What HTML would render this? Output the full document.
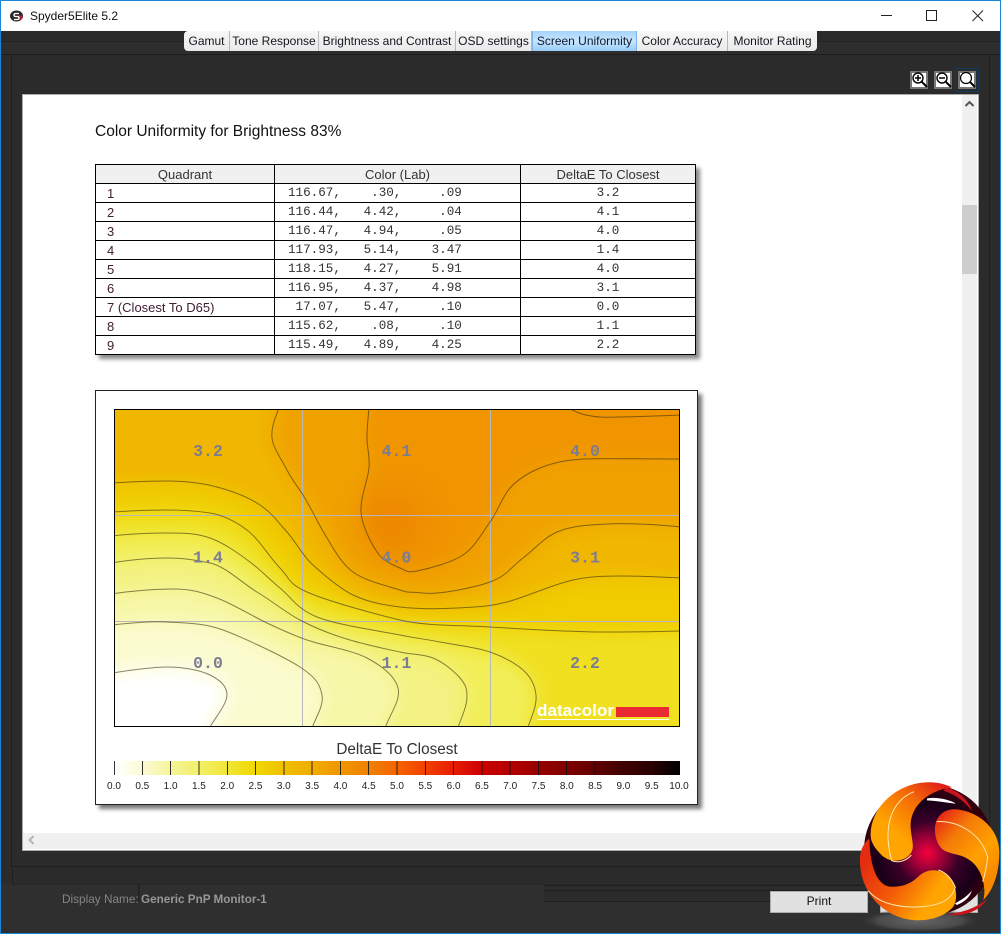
<!DOCTYPE html>
<html><head><meta charset="utf-8"><title>Spyder5Elite 5.2</title>
<style>
html,body{margin:0;padding:0;background:#2b2b2b}
#p{position:relative;width:1001px;height:934px;overflow:hidden;background:#2b2b2b;font-family:"Liberation Sans",sans-serif}
#p div,#p svg,#p table{position:absolute}
.l{background:#1f1f1f}
.tab{top:31px;height:20px;line-height:20px;font-size:12px;text-align:center;color:#15151f;background:linear-gradient(#f8f8f8,#e9e9e9);border-right:1px solid #b8b8b8;box-sizing:border-box;white-space:nowrap}
table{border-collapse:collapse;table-layout:fixed;left:95px;top:164px;width:600px;background:#fff;box-shadow:4px 4px 4px #888}
td,th{border:1px solid #000;height:18px;padding:0;font-size:13px;font-weight:normal;text-align:center;color:#222;line-height:17px;white-space:pre;overflow:hidden}
th{background:#f0f0f0;color:#333}
td.a{text-align:left;padding-left:11px;color:#402030}
td.b{text-align:left;padding-left:13px;font:12.6px/17px "Liberation Mono",monospace;color:#333}
td.c{font:12.6px/17px "Liberation Mono",monospace;color:#333}
.mv{fill:#7c7c92;font:bold 16.5px "Liberation Mono",monospace;text-anchor:middle}
.ct{fill:none;stroke:#3c3010;stroke-opacity:.6;stroke-width:1}
.lb{font:10px "Liberation Sans",sans-serif;fill:#222;text-anchor:middle}
.zb{background:#fff;border:2px solid #777;box-sizing:border-box;width:18px;height:18px;top:71px}
</style></head><body><div id="p">

<div style="left:0;top:0;width:1001px;height:31px;background:#fff"></div>
<svg style="left:8px;top:7px" width="18" height="18" viewBox="0 0 18 18"><ellipse cx="8.500" cy="9" rx="6.500" ry="5.500" fill="#2a2a2a"/><circle cx="12" cy="10.500" r="2.500" fill="#b01c30"/><path d="M11 6.500H7.500Q6 6.500 6 8T7.500 9.500H9.500Q11 9.500 11 11T9.500 12.500H6" fill="none" stroke="#fff" stroke-width="1.300"/></svg>
<div style="left:30px;top:8px;font-size:12px;line-height:16px;color:#111;white-space:nowrap">Spyder5Elite 5.2</div>
<svg style="left:870px;top:0" width="130" height="31"><path d="M11 15.500H22" stroke="#222" fill="none"/><rect x="56.500" y="10.500" width="10" height="10" fill="none" stroke="#222"/><path d="M102.500 10.500L113 21M113 10.500L102.500 21" stroke="#222" fill="none"/></svg>

<!-- dark structure -->
<div style="left:1px;top:41px;width:999px;height:14px;background:#2d2d2d;border-top:1px solid #232323;border-bottom:1px solid #1c1c1c;box-sizing:border-box"></div>
<div class="l" style="left:11px;top:55px;width:1px;height:812px"></div>
<div class="l" style="left:989px;top:55px;width:1px;height:812px"></div>
<div class="l" style="left:11px;top:866px;width:979px;height:1px"></div>
<div style="left:1px;top:884px;width:999px;height:49px;background:#2f2f2f"></div>
<div class="l" style="left:12px;top:869px;width:1px;height:15px"></div>
<div class="l" style="left:12px;top:884px;width:975px;height:1px;background:#262626"></div>
<div class="l" style="left:138px;top:885px;width:2px;height:16px;background:#252525"></div>
<div style="left:544px;top:885px;width:446px;height:16px;background:#2b2b2b"></div>
<div class="l" style="left:544px;top:885px;width:446px;height:1px"></div>
<div class="l" style="left:544px;top:890px;width:446px;height:1px"></div>
<div class="l" style="left:544px;top:901px;width:226px;height:1px"></div>

<!-- tabs -->
<div class="tab" style="left:184px;width:46px;border-radius:4px 0 0 4px">Gamut</div>
<div class="tab" style="left:230px;width:89px">Tone Response</div>
<div class="tab" style="left:319px;width:137px">Brightness and Contrast</div>
<div class="tab" style="left:456px;width:76px">OSD settings</div>
<div class="tab" style="left:532px;width:105px;background:linear-gradient(#a6d4fb,#c8e4fc 50%,#98cdf9);border-left:1px solid #7ab4e8;border-right:1px solid #7ab4e8;color:#0a1a30">Screen Uniformity</div>
<div class="tab" style="left:637px;width:91px">Color Accuracy</div>
<div class="tab" style="left:728px;width:89px;border-radius:0 0 4px 0;border-right:0">Monitor Rating</div>

<!-- zoom buttons -->
<div class="zb" style="left:910px"></div>
<div class="zb" style="left:934px"></div>
<div style="left:955px;top:68px;width:24px;height:24px;border:1px solid #103a60;box-sizing:border-box;background:#2b2b2b"></div>
<div class="zb" style="left:958px"></div>
<svg style="left:905px;top:66px" width="80" height="28" fill="none" stroke="#000">
<circle cx="13" cy="12" r="5" stroke-width="1.400"/><path d="M17 16L22 21M16.500 15.500L21.500 20.500" stroke-width="2"/><path d="M10 12H16M13 9V15" stroke-width="1.500"/>
<circle cx="37" cy="12" r="5" stroke-width="1.400"/><path d="M41 16L46 21" stroke-width="2"/><path d="M34 12H40" stroke-width="1.500"/>
<circle cx="61" cy="12" r="5.500" stroke-width="1.200"/><path d="M65 16L70 21" stroke-width="2"/></svg>

<!-- content -->
<div style="left:22px;top:94px;width:957px;height:757px;background:#fff;border:1px solid #aaa;box-sizing:border-box"></div>
<div style="left:962px;top:95px;width:15px;height:754px;background:#f0f0f0"></div>
<div style="left:962px;top:205px;width:15px;height:69px;background:#cdcdcd"></div>
<svg style="left:962px;top:97px" width="15" height="12"><path d="M3.500 9L7.500 5L11.500 9" fill="none" stroke="#555" stroke-width="2"/></svg>
<div style="left:23px;top:833px;width:939px;height:16px;background:#f0f0f0"></div>
<svg style="left:26px;top:833px" width="12" height="14"><path d="M7.500 3L3.500 7L7.500 11" fill="none" stroke="#b5b5b5" stroke-width="2"/></svg>

<div style="left:95px;top:123px;font-size:15.5px;line-height:18px;color:#111;white-space:nowrap">Color Uniformity for Brightness 83%</div>

<table><colgroup><col style="width:179px"><col style="width:246px"><col style="width:175px"></colgroup>
<tr><th>Quadrant</th><th>Color (Lab)</th><th>DeltaE To Closest</th></tr>
<tr><td class="a">1</td><td class="b">116.67,    .30,     .09</td><td class="c">3.2</td></tr>
<tr><td class="a">2</td><td class="b">116.44,   4.42,     .04</td><td class="c">4.1</td></tr>
<tr><td class="a">3</td><td class="b">116.47,   4.94,     .05</td><td class="c">4.0</td></tr>
<tr><td class="a">4</td><td class="b">117.93,   5.14,    3.47</td><td class="c">1.4</td></tr>
<tr><td class="a">5</td><td class="b">118.15,   4.27,    5.91</td><td class="c">4.0</td></tr>
<tr><td class="a">6</td><td class="b">116.95,   4.37,    4.98</td><td class="c">3.1</td></tr>
<tr><td class="a">7 (Closest To D65)</td><td class="b"> 17.07,   5.47,     .10</td><td class="c">0.0</td></tr>
<tr><td class="a">8</td><td class="b">115.62,    .08,     .10</td><td class="c">1.1</td></tr>
<tr><td class="a">9</td><td class="b">115.49,   4.89,    4.25</td><td class="c">2.2</td></tr>
</table>

<div style="left:95px;top:390px;width:603px;height:415px;background:#fff;border:1px solid #222;box-sizing:border-box;box-shadow:4px 4px 4px #777"></div>

<svg style="left:0;top:0" width="1001" height="934" viewBox="0 0 1001 934">
<defs>
<clipPath id="pc"><rect x="114" y="409" width="566" height="318"/></clipPath>
<filter id="bl" x="-10%" y="-10%" width="120%" height="120%" color-interpolation-filters="sRGB"><feGaussianBlur stdDeviation="9"/></filter>
<filter id="bp" x="-50%" y="-50%" width="200%" height="200%" color-interpolation-filters="sRGB"><feGaussianBlur stdDeviation="18"/></filter>
<linearGradient id="cb"><stop offset="0" stop-color="#fff"/><stop offset=".05" stop-color="#fbfbd4"/><stop offset=".1" stop-color="#f5f59a"/><stop offset=".15" stop-color="#f2ef68"/><stop offset=".2" stop-color="#f1e636"/><stop offset=".25" stop-color="#f0d800"/><stop offset=".3" stop-color="#f0c000"/><stop offset=".35" stop-color="#f0ac00"/><stop offset=".4" stop-color="#f09600"/><stop offset=".45" stop-color="#f08000"/><stop offset=".5" stop-color="#f46400"/><stop offset=".55" stop-color="#f24000"/><stop offset=".6" stop-color="#e81c00"/><stop offset=".65" stop-color="#cc0000"/><stop offset=".7" stop-color="#b40000"/><stop offset=".75" stop-color="#980000"/><stop offset=".8" stop-color="#800000"/><stop offset=".85" stop-color="#600000"/><stop offset=".9" stop-color="#400000"/><stop offset=".95" stop-color="#280000"/><stop offset="1" stop-color="#000"/></linearGradient>
</defs>
<g clip-path="url(#pc)">
<g filter="url(#bl)">
<rect x="60" y="350" width="690" height="440" fill="#fff"/>
<path fill="#fbfbd0" d="M112 673C125 671 151 667 167 667S200 670 210 675S227 686 227 695S215 718 210 727L210 790L750 790L750 350L60 350L60 676Z"/>
<path fill="#f7f7a8" d="M112 625C130 623 150 621 167 622S200 623 217 628S283 656 300 667S320 685 322 695S317 715 312 728L312 790L750 790L750 350L60 350L60 628Z"/>
<path fill="#f3f282" d="M112 594C130 591 155 589 173 589S201 592 217 598S252 616 267 623S290 634 307 640S352 650 367 658S395 676 398 688S391 712 385 728L385 790L750 790L750 350L60 350L60 597Z"/>
<path fill="#f1ee58" d="M112 563C128 560 150 558 167 558S195 560 210 563S242 583 257 592S285 612 300 620S333 635 350 640S386 649 400 652S423 654 433 658S454 671 460 678S467 689 467 697S462 717 458 727L458 790L750 790L750 350L60 350L60 566Z"/>
<path fill="#f0e020" d="M112 536C128 534 150 533 167 533S196 533 210 538S238 553 250 562S269 579 280 588S297 609 317 617S380 631 400 635S425 639 440 642S476 647 490 652S515 663 523 670S535 685 536 695S532 716 528 727L528 790L750 790L750 350L60 350L60 538Z"/>
<path fill="#f0cc00" d="M112 512C128 511 150 510 167 510S197 511 210 513S235 521 247 530S270 558 280 568S287 583 307 592S375 614 400 620S456 625 490 627S570 632 607 632S650 632 682 631L750 631L750 350L60 350L60 513Z"/>
<path fill="#f0b600" d="M112 483C128 482 150 481 167 481S202 483 217 487S248 497 260 505S278 522 287 532S302 555 313 565S339 588 353 595S383 605 400 607S439 609 457 608S488 607 507 602S554 584 573 580S605 576 623 576S660 577 682 578L750 578L750 350L60 350L60 484Z"/>
<path fill="#f0a200" d="M279 408C275 418 271 428 272 438S282 460 287 470S296 484 303 495S319 525 327 538S341 563 353 572S388 586 400 590S408 591 423 593S473 588 490 582S512 566 523 558S543 538 557 532S586 525 607 524S650 524 682 527L750 527L750 350L279 350Z"/>
<path fill="#f09500" d="M369 408C368 418 367 428 367 438S370 456 369 468S360 498 361 512S371 543 377 552S393 565 400 568S407 573 417 571S451 563 463 555S482 533 490 522S502 497 510 488S528 473 540 468S565 460 583 459S640 459 682 459L750 459L750 350L369 350Z"/>
</g>
<ellipse cx="392" cy="522" rx="30" ry="28" fill="#ec8400" filter="url(#bp)"/>
<g stroke="#b8b8b8" stroke-width="1"><path d="M302.500 409V727M490.500 409V727M114 515.500H680M114 621.500H680"/></g>
<g class="ct">
<path d="M112 673C125 671 151 667 167 667S200 670 210 675S227 686 227 695S215 718 210 727"/>
<path d="M112 625C130 623 150 621 167 622S200 623 217 628S283 656 300 667S320 685 322 695S317 715 312 728"/>
<path d="M112 594C130 591 155 589 173 589S201 592 217 598S252 616 267 623S290 634 307 640S352 650 367 658S395 676 398 688S391 712 385 728"/>
<path d="M112 563C128 560 150 558 167 558S195 560 210 563S242 583 257 592S285 612 300 620S333 635 350 640S386 649 400 652S423 654 433 658S454 671 460 678S467 689 467 697S462 717 458 727"/>
<path d="M112 536C128 534 150 533 167 533S196 533 210 538S238 553 250 562S269 579 280 588S297 609 317 617S380 631 400 635S425 639 440 642S476 647 490 652S515 663 523 670S535 685 536 695S532 716 528 727"/>
<path d="M112 512C128 511 150 510 167 510S197 511 210 513S235 521 247 530S270 558 280 568S287 583 307 592S375 614 400 620S456 625 490 627S570 632 607 632S650 632 682 631"/>
<path d="M112 483C128 482 150 481 167 481S202 483 217 487S248 497 260 505S278 522 287 532S302 555 313 565S339 588 353 595S383 605 400 607S439 609 457 608S488 607 507 602S554 584 573 580S605 576 623 576S660 577 682 578"/>
<path d="M279 408C275 418 271 428 272 438S282 460 287 470S296 484 303 495S319 525 327 538S341 563 353 572S388 586 400 590S408 591 423 593S473 588 490 582S512 566 523 558S543 538 557 532S586 525 607 524S650 524 682 527"/>
<path d="M369 408C368 418 367 428 367 438S370 456 369 468S360 498 361 512S371 543 377 552S393 565 400 568S407 573 417 571S451 563 463 555S482 533 490 522S502 497 510 488S528 473 540 468S565 460 583 459S640 459 682 459"/>
<path d="M568 408C578 413 585 416 600 417S650 416 682 415"/>
</g>
</g>
<rect x="114.500" y="409.500" width="565" height="317" fill="none" stroke="#000" stroke-width="1"/>
<text class="mv" x="208" y="456">3.2</text><text class="mv" x="396.500" y="456">4.1</text><text class="mv" x="585" y="456">4.0</text>
<text class="mv" x="208" y="562.500">1.4</text><text class="mv" x="396.500" y="562.500">4.0</text><text class="mv" x="585" y="562.500">3.1</text>
<text class="mv" x="208" y="668">0.0</text><text class="mv" x="396.500" y="668">1.1</text><text class="mv" x="585" y="668">2.2</text>
<text x="537" y="716" fill="#fff" style="font:bold 17px 'Liberation Sans',sans-serif" textLength="77" lengthAdjust="spacingAndGlyphs">datacolor</text>
<rect x="616" y="707" width="53" height="10" fill="#ea2a33"/>
<rect x="537" y="719" width="132" height="1" fill="#fff"/>

<text x="397" y="754" text-anchor="middle" fill="#333" style="font:15.3px 'Liberation Sans',sans-serif">DeltaE To Closest</text>
<rect x="114" y="761" width="566" height="14" fill="url(#cb)"/>
<path stroke="#111" stroke-width="1" opacity=".85" d="M114.500 761V775M142.500 761V775M170.500 761V775M199 761V775M227.500 761V775M255.500 761V775M284 761V775M312 761V775M340.500 761V775M368.500 761V775M397 761V775M425.500 761V775M453.500 761V775M482 761V775M510 761V775M538.500 761V775M566.500 761V775M595 761V775M623.500 761V775M651.500 761V775"/>
<g class="lb">
<text x="114" y="789">0.0</text><text x="142.300" y="789">0.5</text><text x="170.600" y="789">1.0</text><text x="198.900" y="789">1.5</text><text x="227.200" y="789">2.0</text><text x="255.500" y="789">2.5</text><text x="283.800" y="789">3.0</text><text x="312.100" y="789">3.5</text><text x="340.400" y="789">4.0</text><text x="368.700" y="789">4.5</text><text x="397" y="789">5.0</text><text x="425.300" y="789">5.5</text><text x="453.600" y="789">6.0</text><text x="481.900" y="789">6.5</text><text x="510.200" y="789">7.0</text><text x="538.500" y="789">7.5</text><text x="566.800" y="789">8.0</text><text x="595.100" y="789">8.5</text><text x="623.400" y="789">9.0</text><text x="651.700" y="789">9.5</text><text x="679" y="789">10.0</text>
</g>
</svg>

<!-- footer -->
<div style="left:62px;top:892px;font-size:11.8px;line-height:15px;color:#858585;white-space:nowrap">Display Name:</div>
<div style="left:141px;top:892px;font-size:11.7px;line-height:15px;font-weight:bold;color:#979797;white-space:nowrap">Generic PnP Monitor-1</div>
<div style="left:770px;top:891px;width:98px;height:22px;background:#e1e1e1;border:1px solid #adadad;box-sizing:border-box;text-align:center;font-size:12px;line-height:19px;color:#111">Print</div>
<div style="left:880px;top:891px;width:98px;height:22px;background:#e1e1e1;border:1px solid #adadad;box-sizing:border-box"></div>

<!-- logo -->
<svg style="left:840px;top:770px" width="161" height="164" viewBox="0 0 483 492">
<defs>
<radialGradient id="sh"><stop offset="0" stop-color="#666"/><stop offset=".7" stop-color="#4a4a4a"/><stop offset="1" stop-color="#2f2f2f" stop-opacity="0"/></radialGradient>
<radialGradient id="core" gradientUnits="userSpaceOnUse" cx="262" cy="250" r="190"><stop offset="0" stop-color="#f5003c"/><stop offset=".22" stop-color="#a80038"/><stop offset=".5" stop-color="#3a0028"/><stop offset=".8" stop-color="#180018"/><stop offset="1" stop-color="#30000f"/></radialGradient>
<linearGradient id="b1" gradientUnits="userSpaceOnUse" x1="300" y1="40" x2="140" y2="230"><stop offset="0" stop-color="#e02018"/><stop offset=".35" stop-color="#f46a08"/><stop offset=".8" stop-color="#ffa400"/></linearGradient>
<linearGradient id="b2" gradientUnits="userSpaceOnUse" x1="300" y1="140" x2="470" y2="300"><stop offset="0" stop-color="#e82c14"/><stop offset=".3" stop-color="#f47a08"/><stop offset=".7" stop-color="#ffa000"/><stop offset="1" stop-color="#f98a00"/></linearGradient>
<linearGradient id="b3" gradientUnits="userSpaceOnUse" x1="70" y1="280" x2="290" y2="430"><stop offset="0" stop-color="#e42c10"/><stop offset=".45" stop-color="#f25a08"/><stop offset=".85" stop-color="#ffa400"/></linearGradient>
</defs>
<ellipse cx="240" cy="452" rx="182" ry="36" fill="url(#sh)"/>
<circle cx="268" cy="240" r="196" fill="url(#core)"/>
<path d="M320 52C360 65 385 90 397 125C375 95 350 75 310 62Z" fill="#c8141c"/>
<path d="M262 86C290 82 320 88 345 100C320 96 290 92 262 90Z" fill="#fff" stroke="#fff" stroke-width="2"/>
<path d="M345 400C365 390 382 378 396 362C388 385 370 398 350 405Z" fill="#fff"/>
<path d="M320 432C360 430 410 415 442 385C420 425 370 440 330 434Z" fill="#c8141c"/>
<path d="M92 190C95 110 170 40 260 37C290 36 315 42 335 52C260 62 215 110 212 160C210 195 225 225 215 245C200 275 150 285 120 250C100 230 90 210 92 190Z" fill="url(#b1)"/>
<path d="M285 170C290 135 315 115 350 118C420 125 478 180 478 245C478 310 460 360 430 390C440 350 425 300 395 275C365 250 335 255 310 240C290 225 283 195 285 170Z" fill="url(#b2)"/>
<path d="M88 205C65 225 58 250 60 280C62 340 100 420 190 445C250 460 310 445 340 410C355 385 350 345 325 320C300 295 265 295 240 315C215 340 190 352 150 350C115 345 90 300 88 205Z" fill="url(#b3)"/>
<g fill="none" stroke="#ffe8b0" stroke-width="3"><path d="M222 65C160 90 125 160 155 272C175 280 200 272 214 255"/><path d="M290 155C350 150 425 190 443 262C440 290 436 310 428 335"/><path d="M85 362C120 405 190 415 250 410C300 405 335 390 346 352C335 325 320 308 295 300"/></g>
</svg>

<!-- window border -->
<div style="left:0;top:0;width:1001px;height:934px;border:1px solid #1a86d8;box-sizing:border-box"></div>
</div></body></html>
